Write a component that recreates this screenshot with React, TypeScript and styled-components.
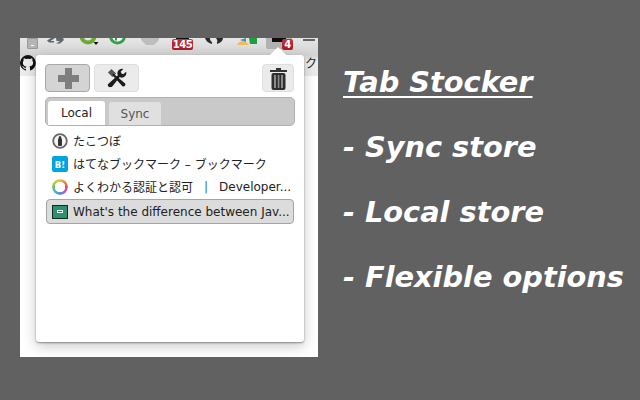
import React from "react";
import styled, { createGlobalStyle } from "styled-components";

const Global = createGlobalStyle`
  html, body { margin: 0; padding: 0; width: 640px; height: 400px; overflow: hidden; background: #616161; }
  * { box-sizing: border-box; }
`;
const Page = styled.div`
  width: 640px; height: 400px; background: #616161; display: flex; padding: 38px 0 0 20px; align-items: flex-start;
`;
const Shot = styled.div`
  position: relative; width: 298px; height: 319px; background: #fff; flex: none; overflow: hidden;
`;
const Toolbar = styled.div`
  height: 17px; background: linear-gradient(#e6e6e6, #d4d4d4); overflow: hidden; display: flex; align-items: flex-start;
`;
const Slot = styled.div`
  flex: none; position: relative; height: 17px; width: ${p => p.$w}px; margin-left: ${p => p.$gap}px;
`;
const Bookmarks = styled.div`
  height: 21px; background: linear-gradient(#d2d2d2, #ececec 30%, #ececec); display: flex; justify-content: space-between; align-items: flex-start; padding: 0 1px 0 0;
  font: 12px/14px "Noto Sans CJK JP", sans-serif; color: #222;
`;
const Kana = styled.span`padding-top: 1px;`;
const Popup = styled.div`
  position: absolute; left: 16px; top: 17px; width: 268px; height: 287px; background: #fff; border-radius: 3px;
  box-shadow: 0 1px 2px rgba(0,0,0,.4), 0 4px 14px rgba(0,0,0,.22); padding: 9px 9px 0;
  &::before { content: ""; position: absolute; right: 18px; top: -8px; border: 8px solid transparent; border-top: 0; border-bottom-color: #fff; }
`;
const Actions = styled.div`
  display: flex; gap: 4px; align-items: center; margin-bottom: 5px;
`;
const Tool = styled.button`
  width: ${p => p.$w}px; height: 28px; padding: 0; display: flex; align-items: center; justify-content: center;
  border-radius: 4px; border: 1px solid ${p => p.$on ? "#a8a8a8" : "#dedede"};
  background: ${p => p.$on ? "#d4d4d4" : "#ebebeb"};
`;
const PlusTool = styled(Tool)`
  padding-left: 2px;
`;
const TrashTool = styled(Tool)`
  margin-left: auto; margin-right: 1px;
`;
const TabBar = styled.div`
  height: 29px; background: #c9c9c9; border: 1px solid #b0b0b0; border-radius: 5px; display: flex; align-items: flex-end; gap: 4px; padding-left: 2px; margin-bottom: 3px;
`;
const Tab = styled.div`
  width: ${p => p.$w}px; height: ${p => p.$on ? 24 : 23}px; border-radius: 3px 3px 0 0; background: ${p => p.$on ? "#fff" : "#e0e0e0"};
  color: ${p => p.$on ? "#222" : "#555"}; font: 12px/25px "DejaVu Sans", sans-serif; text-align: center;
`;
const List = styled.div`display: flex; flex-direction: column; margin: 0 1px;`;
const Row = styled.div`
  height: 23px; display: flex; align-items: center; gap: 5px; padding-left: 6px; font: 12px "DejaVu Sans", "Noto Sans CJK JP", sans-serif; color: #222; white-space: nowrap;
`;
const SelectedRow = styled(Row)`
  height: 25px; margin-top: 1px; padding-left: 5px; border-radius: 4px; border: 1px solid #a4a4a4; background: #dcdcdc;
`;
const Copy = styled.div`
  margin: 26px 0 0 25px; display: flex; flex-direction: column; gap: 29px; color: #fff;
  font: italic bold 28.8px/36px "DejaVu Sans", sans-serif; white-space: nowrap;
`;
const Title = styled.div`text-decoration: underline; text-decoration-thickness: 2px; text-underline-offset: 4px;`;
const Blue = styled.span`color: #1f6fc8; margin: 0 6px;`;
const Ring = styled.div`
  width: 16px; height: 16px; border-radius: 50%; flex: none;
  background: conic-gradient(#f0c23c, #f08a3c, #e0506a, #b060c8, #5a8fe0, #48b8c8, #6cc06a, #c0d040, #f0c23c);
  -webkit-mask: radial-gradient(circle, transparent 5px, #000 5.500px);
  mask: radial-gradient(circle, transparent 5px, #000 5.500px);
`;
const Badge = styled.div`
  position: absolute; left: ${p => p.$x}px; top: 1px; height: 11px; width: ${p => p.$w}px; text-align: center; background: linear-gradient(#c8303a, #a31c24); border-radius: 2px; color: #fff; font: bold 10px/11px "DejaVu Sans", sans-serif; letter-spacing: -0.5px;
`;
const Minimize = styled.div`
  position: absolute; left: 0; top: 0; width: 11px; height: 11px; background: #b4b4b4; border: 1px solid #999; border-radius: 1px;
  &::after { content: ""; position: absolute; left: 3px; top: 6px; width: 3px; height: 1px; background: #fff; }
`;
const ActiveWell = styled.div`
  position: absolute; left: 0; top: 0; width: 26px; height: 11px; background: #b2b2b2; border-radius: 0 0 2px 2px;
  &::after { content: ""; position: absolute; left: 6px; top: 0; width: 14px; height: 4px; background: #0c0c0c; }
`;
const Bar = styled.div`
  position: absolute; left: ${p => p.$x}px; top: ${p => p.$y || 0}px; width: ${p => p.$w}px; height: 2px; background: ${p => p.$c};
`;

const Plus = () => <svg width="21" height="21" viewBox="0 0 21 21"><path d="M7 0h7v7h7v7h-7v7H7v-7H0V7h7z" fill="#7e7e7e"/></svg>;
const Tools = () => <svg width="20" height="20" viewBox="0 0 22 22"><path d="M1 5 L5 1 L10 6 L6 10z" fill="#555"/><path d="M7 6 L20 17 a2.200 2.200 0 0 1-3 3 L6 8z" fill="#1b1b1b"/><path d="M4 21a2.400 2.400 0 0 1-3-3L12 8a5 5 0 0 1 6-7l-3 3 1 2 2 1 3-3a5 5 0 0 1-7 6L6 20a3 3 0 0 1-2 1z" fill="#1b1b1b"/></svg>;
const Trash = () => <svg width="17" height="23" viewBox="0 0 17 23"><path d="M0 3h6V1h5v2h6v2H0z" fill="#333"/><rect x="1.500" y="6" width="14" height="17" rx="2" fill="#2e2e2e"/><path d="M4 8v13h2V8zM7.800 8v13h1.600V8zM11 8v13h2V8z" fill="#8a8a8a"/></svg>;
const Octo = () => <svg width="16" height="16" viewBox="0 0 16 16"><path fill="#111" d="M8 0a8 8 0 0 0-2.500 15.600c.4.100.5-.2.500-.4v-1.400c-2.200.5-2.700-1-2.700-1-.4-.9-.9-1.200-.9-1.200-.7-.5.100-.5.100-.5.800.100 1.200.8 1.200.8.700 1.200 1.900.9 2.300.7.100-.5.300-.9.500-1.100-1.800-.2-3.600-.9-3.600-4 0-.9.300-1.600.8-2.100-.1-.2-.4-1 .1-2.100 0 0 .7-.2 2.200.8a7.500 7.500 0 0 1 4 0c1.500-1 2.200-.8 2.200-.8.400 1.100.2 1.900.1 2.100.5.600.8 1.300.8 2.100 0 3.100-1.900 3.700-3.700 3.900.3.300.6.800.6 1.500v2.200c0 .2.100.5.600.4A8 8 0 0 0 8 0z"/></svg>;
const IconClock = () => <svg width="16" height="16" viewBox="0 0 16 16"><circle cx="8" cy="8" r="6.800" fill="#f4f4f4" stroke="#666" strokeWidth="1.800"/><path d="M8 3c1 0 1.300 1 1.300 2l.7 1.500V12a1 1 0 0 1-1 1H7a1 1 0 0 1-1-1V6.500L6.700 5C6.700 4 7 3 8 3z" fill="#333"/></svg>;
const IconHatena = () => <svg width="16" height="16" viewBox="0 0 16 16"><rect width="16" height="16" rx="2" fill="#00a4de"/><text x="8" y="11.500" textAnchor="middle" fontSize="8.500" fontWeight="700" fontFamily="DejaVu Sans" fill="#fff">B!</text></svg>;
const IconSO = () => <svg width="16" height="14" viewBox="0 0 16 14"><rect x=".5" y=".5" width="15" height="13" fill="#2f8f6e" stroke="#0f2a26"/><rect x="5" y="5" width="6" height="3" fill="#e4fff4"/><rect x="6" y="6" width="4" height="1" fill="#2f6f5e"/></svg>;
const Swap = () => <svg width="17" height="17" viewBox="0 0 17 17"><path d="M0 2.500L4 0h4L3.500 3H7v1.500H2zM9 0h7l1 2-4 3.500H9l4-2.500H9.500z" fill="#5f6670"/></svg>;
const GreenRing = () => <svg width="20" height="17" viewBox="0 0 20 17"><circle cx="9" cy="-2" r="6.500" fill="none" stroke="#6aa82f" strokeWidth="4"/><path d="M14.500 4h5l-2.500 3z" fill="#111"/></svg>;
const GreenDot = () => <svg width="17" height="17" viewBox="0 0 17 17"><circle cx="8.500" cy="-2" r="7" fill="#fff" stroke="#2f9f4a" strokeWidth="3"/><rect x="6" y="0" width="2" height="2.500" fill="#2f9f4a"/></svg>;
const Octagon = () => <svg width="18" height="17" viewBox="0 0 18 17"><path d="M0 0h18v2l-5 5H5L0 2z" fill="#bdbdbd"/></svg>;
const OctoCut = () => <svg width="19" height="17" viewBox="0 0 19 17"><path d="M0 0h5c0 3 1 3 2 4v2C3 5 1 3 0 0zM11 0h7c0 3-3 5-6 6V4c1-1 0-2-1-4z" fill="#2a2a2a"/></svg>;
const Logo = () => <svg width="20" height="17" viewBox="0 0 20 17"><path d="M0 7c1-3 5-5 9-3l3 3z" fill="#f4bd52"/><path d="M3 2l6-2v4C7 3 5 3 3 2z" fill="#3f8fd8"/><path d="M12 0h8v6h-7z" fill="#1f9d3f"/></svg>;

export default function App() {
  return (
    <>
      <Global />
      <Page>
        <Shot>
          <Toolbar>
            <Slot $gap={7} $w={11}><Minimize /></Slot>
            <Slot $gap={9} $w={17}><Swap /></Slot>
            <Slot $gap={15} $w={20}><GreenRing /></Slot>
            <Slot $gap={10} $w={17}><GreenDot /></Slot>
            <Slot $gap={15} $w={18}><Octagon /></Slot>
            <Slot $gap={13} $w={21}><Bar $x={4} $w={13} $c="#111" /><Badge $x={0} $w={21}>145</Badge></Slot>
            <Slot $gap={12} $w={19}><OctoCut /></Slot>
            <Slot $gap={13} $w={20}><Logo /></Slot>
            <Slot $gap={9} $w={26}><ActiveWell /><Badge $x={16} $w={11}>4</Badge></Slot>
            <Slot $gap={11} $w={12}><Bar $x={0} $y={1} $w={12} $c="#666" /></Slot>
          </Toolbar>
          <Bookmarks><Octo /><Kana>ク</Kana></Bookmarks>
          <Popup>
            <Actions>
              <PlusTool $w={45} $on><Plus /></PlusTool>
              <Tool $w={45}><Tools /></Tool>
              <TrashTool $w={32}><Trash /></TrashTool>
            </Actions>
            <TabBar>
              <Tab $w={57} $on>Local</Tab>
              <Tab $w={52}>Sync</Tab>
            </TabBar>
            <List>
              <Row><IconClock />たこつぼ</Row>
              <Row><IconHatena />はてなブックマーク – ブックマーク</Row>
              <Row><Ring />よくわかる認証と認可<Blue>|</Blue>Developer...</Row>
              <SelectedRow><IconSO />What's the difference between Jav...</SelectedRow>
            </List>
          </Popup>
        </Shot>
        <Copy>
          <Title>Tab Stocker</Title>
          <div>- Sync store</div>
          <div>- Local store</div>
          <div>- Flexible options</div>
        </Copy>
      </Page>
    </>
  );
}
